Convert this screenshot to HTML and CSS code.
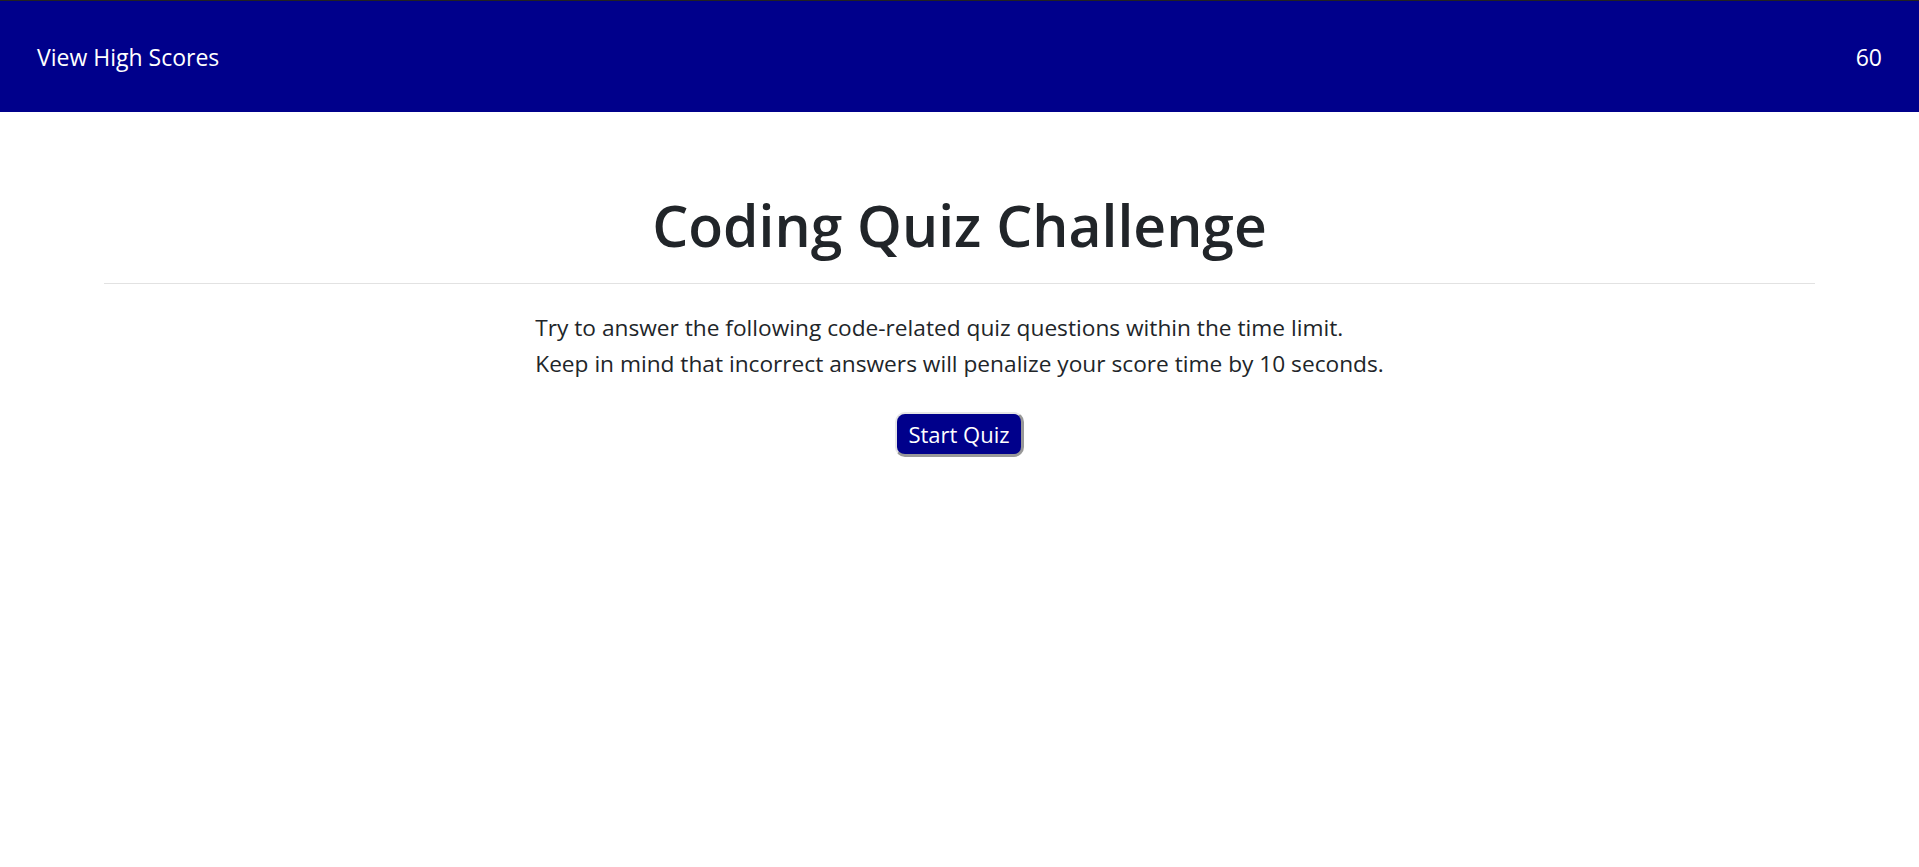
FILE: index.html
```html
<!DOCTYPE html>
<html lang="en">
<head>
  <meta charset="UTF-8" />
  <meta name="viewport" content="width=device-width, initial-scale=1.0"/>
  <title>Coding Quiz Challenge</title>
  <link rel="stylesheet" href="styles.css">
</head>
<body>

  <header class="topbar">
    <a href="#" class="high-scores">View High Scores</a>
    <span id="timer">60</span>
  </header>

  <main class="quiz">
    <h1 class="quiz-title">Coding Quiz Challenge</h1>
    <hr class="divider">

    <div class="intro">
      <p>Try to answer the following code-related quiz questions within the time limit.</p>
      <p>Keep in mind that incorrect answers will penalize your score time by 10 seconds.</p>
    </div>

    <div class="start">
      <button id="start-btn" class="start-btn">Start Quiz</button>
    </div>
  </main>

</body>
</html>
```

FILE: styles.css
```css
body {
  margin: 0;
  font-family: "Open Sans", "Noto Sans", Arial, sans-serif;
  color: #212529;
  background-color: #fff;
}

.topbar {
  display: flex;
  justify-content: space-between;
  align-items: center;
  height: 111px;
  padding: 0 37px;
  background-color: darkblue;
  border-top: 1px solid #222;
  color: #fff;
  font-size: 23px;
}

.high-scores {
  color: #fff;
  text-decoration: none;
}

.quiz {
  padding: 0 104px;
}

.quiz-title {
  margin: 79px 0 0;
  text-align: center;
  font-size: 57px;
  font-weight: 600;
  line-height: 68px;
}

.divider {
  margin: 24px 0 0;
  border: 0;
  border-top: 1px solid #e2e2e2;
}

.intro {
  width: fit-content;
  margin: 26px auto 0;
  font-size: 22.7px;
}

.intro p {
  margin: 0;
  line-height: 36px;
}

.start {
  text-align: center;
  margin-top: 30px;
}

.start-btn {
  padding: 5px 11px;
  font-family: inherit;
  font-size: 22px;
  line-height: 30px;
  color: #fff;
  background-color: darkblue;
  border-style: solid;
  border-width: 2px 3px 3px 2px;
  border-color: #e6e6e6 #999 #999 #e6e6e6;
  border-radius: 10px;
  cursor: pointer;
}
```
